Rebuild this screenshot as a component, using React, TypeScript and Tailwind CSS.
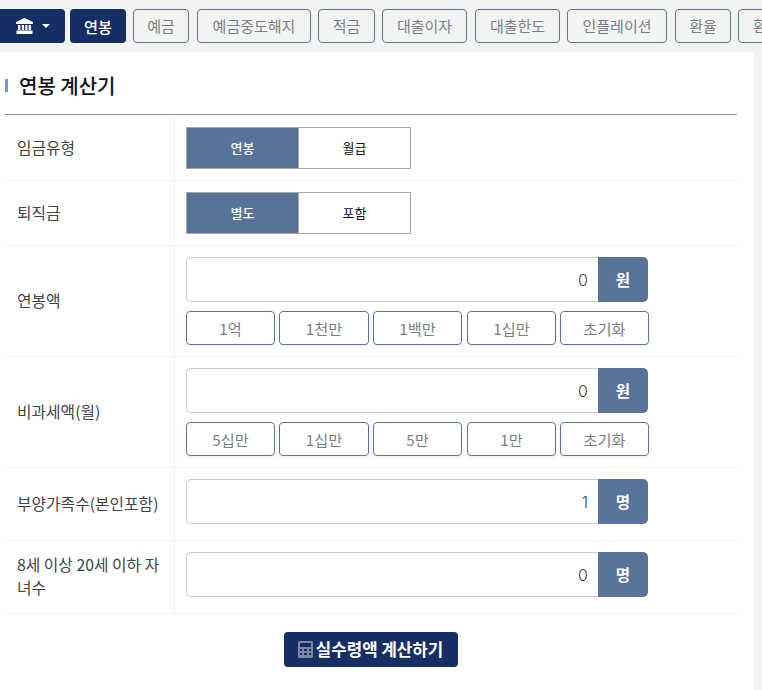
const font = { fontFamily: '"Noto Sans CJK KR", "Noto Sans", sans-serif' };

const navItems: [string, string][] = [
  ['예금', 'w-[56px]'],
  ['예금중도해지', 'ml-[1px] w-[114px]'],
  ['적금', 'w-[57px]'],
  ['대출이자', 'w-[85px]'],
  ['대출한도', 'ml-[1px] w-[85px]'],
  ['인플레이션', 'w-[100px]'],
  ['환율', 'ml-[1px] w-[56px]'],
  ['환율계산', 'w-[85px]'],
];

function Bank() {
  return (
    <svg width="17" height="16" viewBox="0 0 17 16" fill="#fff">
      <path d="M8.5 0 L17 4 V6 H0 V4 Z" />
      <rect x="2" y="7" width="2.4" height="5" />
      <rect x="5.8" y="7" width="2.2" height="5" />
      <rect x="9.2" y="7" width="2.2" height="5" />
      <rect x="12.6" y="7" width="2.4" height="5" />
      <rect x="0.5" y="12.5" width="16" height="3.5" />
    </svg>
  );
}

function Calc() {
  return (
    <svg width="15" height="17" viewBox="0 0 15 17" className="shrink-0">
      <path fill="#7b87a3" fillRule="evenodd" d="M1.5 0h12A1.5 1.5 0 0 1 15 1.5v14a1.5 1.5 0 0 1-1.5 1.5h-12A1.5 1.5 0 0 1 0 15.5v-14A1.5 1.5 0 0 1 1.5 0ZM2 2v4h11V2ZM2 8v2h2V8Zm4 0v2h3V8Zm5 0v2h2V8ZM2 12v2h2v-2Zm4 0v2h3v-2Zm5 0v2h2v-2Z" />
    </svg>
  );
}

function Row({ label, h, children, top, labelPad }: { label: string; h: string; children: React.ReactNode; top?: string; labelPad?: string }) {
  return (
    <div className={`flex border-b border-[#eff1f6] ${h}`}>
      <div className={`flex w-[170px] shrink-0 items-center border-r border-[#eff1f6] pl-3 pr-2 text-[15.8px] leading-[23px] text-[#444] ${labelPad ?? 'pb-[2px]'}`}>
        {label}
      </div>
      <div className={`flex flex-1 flex-col pl-[11px] ${top ?? 'pt-[11px]'}`}>{children}</div>
    </div>
  );
}

function Toggle({ a, b }: { a: string; b: string }) {
  return (
    <div className="flex h-[42px] w-[225px] border border-[#a8a8a8] text-[13px]">
      <div className="flex w-[112px] items-center justify-center border-r border-[#a8a8a8] bg-[#587399] font-medium text-white">{a}</div>
      <div className="flex flex-1 items-center justify-center bg-white text-[#111]">{b}</div>
    </div>
  );
}

function Field({ value, unit }: { value: string; unit: string }) {
  return (
    <div className="flex h-[45px] w-[462px]">
      <div className="flex flex-1 items-center justify-end rounded-l-[5px] border border-r-0 border-[#cccccc] bg-white pr-[10px] text-[16px] font-light text-[#444]" style={{ fontFamily: 'Inter, sans-serif' }}>
        {value}
      </div>
      <div className="flex w-[50px] items-center justify-center rounded-r-[5px] bg-[#587399] text-[15.6px] font-bold text-white">
        {unit}
      </div>
    </div>
  );
}

function Quick({ items }: { items: string[] }) {
  const cls = ['w-[89px]', 'ml-[4px] w-[90px]', 'ml-[4px] w-[89px]', 'ml-[5px] w-[89px]', 'ml-[4px] w-[89px]'];
  return (
    <div className="mt-[9px] flex w-[463px]">
      {items.map((t, i) => (
        <div
          key={t}
          className={`flex h-[34px] items-center justify-center rounded-[4px] border border-[#5d759b] bg-white text-[15.2px] text-[#7a7f87] shadow-[0_2px_4px_rgba(0,0,0,0.06)] ${cls[i]}`}
        >
          {t}
        </div>
      ))}
    </div>
  );
}

export default function App() {
  return (
    <div className="h-[690px] w-[762px] overflow-hidden bg-[#f3f3f3]" style={font}>
      <div className="flex h-[52px] items-start gap-[7px] overflow-hidden pt-[9px]">
        <div className="flex h-[34px] w-[65px] shrink-0 items-center justify-center gap-[9px] rounded-r-[4px] bg-[#152f65] pl-[1px]">
          <Bank />
          <span className="h-0 w-0 border-x-[4px] border-t-[4px] border-x-transparent border-t-white" />
        </div>
        <div className="-ml-[2px] flex h-[34px] w-[56px] shrink-0 items-center justify-center rounded-[4px] bg-[#152f65] text-[15.2px] font-medium text-white">
          연봉
        </div>
        {navItems.map(([t, w]) => (
          <div
            key={t}
            className={`flex h-[34px] shrink-0 items-center justify-center rounded-[4px] border border-[#5d759b] text-[15px] text-[#7a7f87] ${w}`}
          >
            {t}
          </div>
        ))}
      </div>
      <div className="h-[638px] w-[754px] bg-white pl-[5px] pr-[17px]">
        <div className="flex h-[63px] items-center border-b border-[#999] pt-[5px]">
          <span className="h-[13px] w-[3px] bg-[#6f96e6]" />
          <h1 className="ml-[11px] text-[20px] font-medium text-[#111]">연봉 계산기</h1>
        </div>
        <Row label="임금유형" h="h-[66px]" top="pt-[12px]" labelPad="pb-0">
          <Toggle a="연봉" b="월급" />
        </Row>
        <Row label="퇴직금" h="h-[65px]">
          <Toggle a="별도" b="포함" />
        </Row>
        <Row label="연봉액" h="h-[111px]">
          <Field value="0" unit="원" />
          <Quick items={['1억', '1천만', '1백만', '1십만', '초기화']} />
        </Row>
        <Row label="비과세액(월)" h="h-[111px]">
          <Field value="0" unit="원" />
          <Quick items={['5십만', '1십만', '5만', '1만', '초기화']} />
        </Row>
        <Row label="부양가족수(본인포함)" h="h-[73px]">
          <Field value="1" unit="명" />
        </Row>
        <Row label="8세 이상 20세 이하 자녀수" h="h-[73px]">
          <Field value="0" unit="명" />
        </Row>
        <div className="flex justify-center pt-[18px] pr-[1px]">
          <div className="flex h-[35px] w-[174px] items-center justify-center gap-[3px] rounded-[4px] bg-[#152f65] text-[16.8px] font-bold text-white">
            <Calc />
            실수령액 계산하기
          </div>
        </div>
      </div>
    </div>
  );
}
